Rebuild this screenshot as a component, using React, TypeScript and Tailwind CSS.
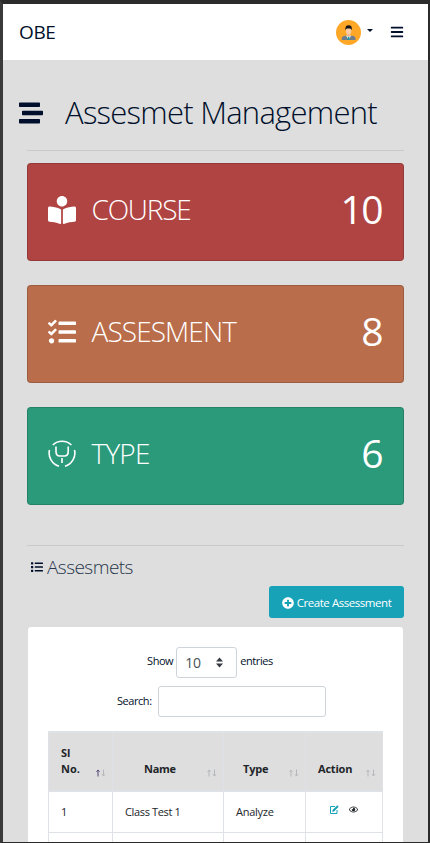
import type { ReactNode } from 'react';
import { FaStream, FaBars, FaBookReader, FaTasks, FaList, FaPlusCircle, FaRegEye } from 'react-icons/fa';

function Avatar() {
  return (
    <svg width="25" height="25" viewBox="0 0 25 25">
      <circle cx="12.5" cy="12.5" r="12.5" fill="#ffa828" />
      <path d="M5.7 20v-1.6c0-1.4 1-2.2 3-2.7h7.8c2 .5 3 1.3 3 2.7V20z" fill="#6f7d8c" />
      <path d="M10 15.5l2.6 4.5 2.6-4.5z" fill="#f4f4f4" />
      <path d="M12 16.5h1.2l.6 3.5h-2.4z" fill="#159aa5" />
      <path d="M11 13h3.2v2.7l-1.6 1.2-1.6-1.2z" fill="#e9b592" />
      <ellipse cx="12.6" cy="10.8" rx="2.8" ry="3.7" fill="#fbcba6" />
      <path d="M9.5 10.5c-.6-3.4.5-5.3 3.1-5.3s3.8 1.9 3.1 5.3c-.4-1.6-1-2-1.6-2.1h-3c-.7.2-1.2.7-1.6 2.1z" fill="#151515" />
    </svg>
  );
}

function TypeIcon() {
  return (
    <svg width="28" height="28" viewBox="0 0 28 28" fill="none" stroke="#fff" strokeWidth="1.6">
      <path d="M4.800 5a13.500 13.500 0 0 1 18.600 0M1.500 10C-.2 17 4 24 11 26.300M26.500 10C28.200 17 24 24 17 26.300" />
      <path d="M8 6.500v5c0 3 1.500 4.500 3.800 4.500h4.600c2.300 0 3.800-1.500 3.800-4.500v-5M14 18v5" />
    </svg>
  );
}

function StatCard({ icon, label, value, color }: { icon: ReactNode; label: ReactNode; value: string; color: string }) {
  return (
    <div className={'flex h-[98px] items-center rounded-[4px] border border-black/15 px-5 text-white ' + color}>
      <span className="w-[43.500px] shrink-0 pb-1">{icon}</span>
      <span className="flex-1 pb-1.5 text-[28px] leading-9 font-light">{label}</span>
      <span className="pr-px pb-1.5 text-[39px] leading-[48px] tracking-[-1.5px]">{value}</span>
    </div>
  );
}

function Sort({ active }: { active?: boolean }) {
  return (
    <svg width="10" height="8" viewBox="0 0 10 8" fill="none" className="shrink-0">
      <path d="M2 7.500V1M.5 2.700L2 1l1.500 1.700" stroke={active ? '#554477' : '#b5b7ba'} />
      <path d="M7.500.5V7M6 5.300L7.500 7 9 5.300" stroke="#b5b7ba" />
    </svg>
  );
}

export default function App() {
  return (
    <div className="h-[843px] w-[430px] overflow-hidden border-t-4 border-r-2 border-b border-l-3 border-[#2b2b2b] border-l-[#3b3a3b] bg-[#dedede] font-['Open_Sans','Noto_Sans',sans-serif] text-[#000f2b]">
      <header className="flex h-14 items-center bg-white pr-6 pl-4">
        <span className="flex-1 pt-px text-[19px] tracking-[-0.4px]">OBE</span>
        <Avatar />
        <span className="mt-[-3px] ml-1.5 border-x-[3.500px] border-t-[3.500px] border-x-transparent border-t-[#000f2b]" />
        <FaBars className="ml-[17px] text-[14px]" />
      </header>
      <h1 className="flex h-[90px] items-center pt-4 pl-4">
        <FaStream className="text-2xl" />
        <span className="ml-[22px] pb-0.5 text-[31px] leading-10 font-light tracking-[-0.74px] whitespace-nowrap">Assesmet Management</span>
      </h1>
      <main className="w-[401px] pl-6">
        <div className="mb-3 h-px bg-[#cacaca]" />
        <div className="grid gap-6">
          <StatCard color="bg-[#b04442]" icon={<FaBookReader className="text-[28px]" />} label={<span className="tracking-[-1.2px]">COURSE</span>} value="10" />
          <StatCard color="bg-[#b96d4a]" icon={<FaTasks className="text-[28px]" />} label={<span className="tracking-[-0.9px]">ASSESMENT</span>} value="8" />
          <StatCard color="bg-[#2b9a7a]" icon={<TypeIcon />} label={<span className="tracking-[-0.8px]">TYPE</span>} value="6" />
        </div>
        <div className="mt-10 h-px bg-[#cacaca]" />
        <h2 className="flex h-10 items-center gap-1 pt-1 pl-1">
          <FaList className="mb-0.5 text-xs" />
          <span className="pb-0.5 text-[19px] font-light tracking-[-0.55px] text-[#27364c]">Assesmets</span>
        </h2>
        <div className="flex justify-end">
          <button className="flex h-8 w-[135px] items-center justify-center gap-[3px] rounded-[3px] bg-[#17a2b8] pt-0.5 text-[11.500px] tracking-[-0.45px] whitespace-nowrap text-white">
            <FaPlusCircle className="text-xs" />
            <span>Create Assessment</span>
          </button>
        </div>
        <section className="mx-px mt-[9px] h-[260px] rounded-t-[3px] bg-white px-5 pt-5 text-[11px]">
          <div className="flex h-[31px] justify-center gap-[3px] pr-[11px]">
            <span className="pt-1.5 tracking-[-0.45px]">Show</span>
            <div className="flex w-[61px] items-center justify-between rounded-[3px] border border-[#ced4da] pr-3 pl-2 text-sm text-[#495057]">
              <span className="tracking-[-0.3px]">10</span>
              <svg width="9" height="11" viewBox="0 0 9 11" fill="#343a40"><path d="M4.500.5L8 4.500H1zM4.500 10.500L8 6.500H1z" /></svg>
            </div>
            <span className="pt-1.5 tracking-[-0.4px]">entries</span>
          </div>
          <div className="mt-2 flex h-[31px] items-center gap-1.5 pl-[69px]">
            <span className="w-[35px] pb-px whitespace-nowrap tracking-[-0.45px]">Search:</span>
            <div className="h-[31px] w-[168px] rounded-[3px] border border-[#ced4da]" />
          </div>
          <table className="mt-3.5 w-[335px] table-fixed border-separate border-spacing-0 border-l border-[#dee2e6] text-[#212529]">
            <colgroup><col className="w-16" /><col className="w-[111px]" /><col className="w-[82px]" /><col className="w-[77px]" /></colgroup>
            <thead className="bg-[#dedede] font-semibold">
              <tr className="h-[61px]">
                <th className="border-t-2 border-r border-b-2 border-[#dee2e6] p-0 align-bottom"><div className="flex items-end justify-between pr-[6px] pb-[13px] pl-3 text-left leading-4"><span>Sl<br />No.</span><Sort active /></div></th>
                <th className="border-t-2 border-r border-b-2 border-[#dee2e6] p-0 align-bottom"><div className="flex items-end justify-between pr-[6px] pb-[13px] pl-[31px] leading-4"><span className="tracking-[-0.3px]">Name</span><Sort /></div></th>
                <th className="border-t-2 border-r border-b-2 border-[#dee2e6] p-0 align-bottom"><div className="flex items-end justify-between pr-[6px] pb-[13px] pl-[19px] leading-4"><span className="tracking-[-0.2px]">Type</span><Sort /></div></th>
                <th className="border-t-2 border-r border-b-2 border-[#dee2e6] p-0 align-bottom"><div className="flex items-end justify-between pr-[6px] pb-[13px] pl-3 leading-4"><span className="tracking-[-0.2px]">Action</span><Sort /></div></th>
              </tr>
            </thead>
            <tbody>
              <tr className="h-[41px]">
                <td className="border-r border-b border-[#dee2e6] p-0 pl-3">1</td>
                <td className="border-r border-b border-[#dee2e6] p-0 pl-3 tracking-[-0.35px]">Class Test 1</td>
                <td className="border-r border-b border-[#dee2e6] p-0 pl-3 tracking-[-0.25px]">Analyze</td>
                <td className="border-r border-b border-[#dee2e6] p-0">
                  <div className="flex items-center gap-2.5 pb-[5px] pl-6">
                    <svg width="9" height="9" viewBox="0 0 9 9" fill="none" stroke="#17a2b8"><path d="M5 1.500H.5v7h6.500V5" /><path d="M3 6l5-5" strokeWidth="2" /><path d="M2.500 6.700l1-2.200 1.200 1.200z" strokeWidth=".5" /></svg>
                    <FaRegEye className="text-[9px]" />
                  </div>
                </td>
              </tr>
              <tr className="h-10"><td className="border-r border-[#dee2e6]" /><td className="border-r border-[#dee2e6]" /><td className="border-r border-[#dee2e6]" /><td className="border-r border-[#dee2e6]" /></tr>
            </tbody>
          </table>
        </section>
      </main>
    </div>
  );
}
